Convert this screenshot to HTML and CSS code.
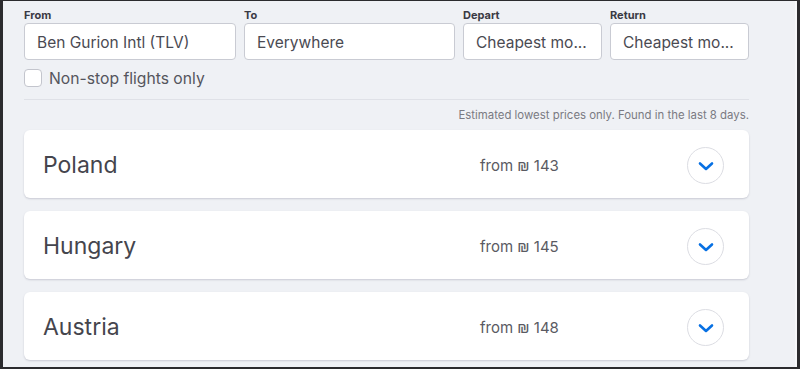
FILE: index.html
```html
<!DOCTYPE html>
<html>
<head>
<meta charset="utf-8">
<link rel="stylesheet" href="styles.css">
</head>
<body>
<div class="frame">
  <div class="content">
    <div class="fields">
      <div class="field f-from">
        <div class="label">From</div>
        <div class="box">Ben Gurion Intl (TLV)</div>
      </div>
      <div class="field f-to">
        <div class="label">To</div>
        <div class="box">Everywhere</div>
      </div>
      <div class="field f-date">
        <div class="label">Depart</div>
        <div class="box">Cheapest mo...</div>
      </div>
      <div class="field f-date">
        <div class="label">Return</div>
        <div class="box">Cheapest mo...</div>
      </div>
    </div>
    <label class="check"><span class="checkbox"></span><span>Non-stop flights only</span></label>
    <div class="divider"></div>
    <div class="note">Estimated lowest prices only. Found in the last 8 days.</div>
    <div class="list">
      <div class="card">
        <div class="country">Poland</div>
        <div class="price">from ₪ 143</div>
        <div class="toggle"><svg width="18" height="12" viewBox="0 0 18 12"><path d="M3 3.5 L9 9 L15 3.5" fill="none" stroke="#0770e3" stroke-width="2.6" stroke-linecap="round" stroke-linejoin="round"/></svg></div>
      </div>
      <div class="card">
        <div class="country">Hungary</div>
        <div class="price">from ₪ 145</div>
        <div class="toggle"><svg width="18" height="12" viewBox="0 0 18 12"><path d="M3 3.5 L9 9 L15 3.5" fill="none" stroke="#0770e3" stroke-width="2.6" stroke-linecap="round" stroke-linejoin="round"/></svg></div>
      </div>
      <div class="card">
        <div class="country">Austria</div>
        <div class="price">from ₪ 148</div>
        <div class="toggle"><svg width="18" height="12" viewBox="0 0 18 12"><path d="M3 3.5 L9 9 L15 3.5" fill="none" stroke="#0770e3" stroke-width="2.6" stroke-linecap="round" stroke-linejoin="round"/></svg></div>
      </div>
    </div>
  </div>
</div>
</body>
</html>
```

FILE: styles.css
```css
* { box-sizing: border-box; }
html, body { margin: 0; padding: 0; }
body {
  width: 800px;
  height: 369px;
  overflow: hidden;
  font-family: Inter, "Noto Sans", sans-serif;
  color: #444;
  background: #2b2b2e;
}
.frame {
  height: 366px;
  margin-top: 1px;
  margin-left: 3px;
  margin-right: 3px;
  background: #eff1f5;
  border-right: 2px solid #f7f8fa;
  overflow: hidden;
}
.content {
  width: 725px;
  margin-left: 21px;
}
.fields {
  display: flex;
  gap: 8px;
  padding-top: 7px;
}
.field { display: flex; flex-direction: column; }
.f-from { width: 212px; }
.f-to { width: 211px; }
.f-date { width: 139px; }
.label {
  font-size: 11px;
  font-weight: 700;
  color: #3a3a44;
  height: 15px;
  line-height: 15px;
}
.box {
  height: 37px;
  background: #fff;
  border: 1px solid #c9cbd3;
  border-radius: 4px;
  padding-left: 12px;
  font-size: 15.5px;
  line-height: 37px;
  color: #4a4a52;
  white-space: nowrap;
  overflow: hidden;
}
.check {
  display: flex;
  align-items: center;
  gap: 7px;
  margin-top: 9px;
  height: 18px;
  font-size: 15.7px;
  color: #55555d;
}
.checkbox {
  width: 18px;
  height: 18px;
  border: 1px solid #c3c5cd;
  border-radius: 4px;
  background: #fff;
}
.divider {
  margin-top: 12px;
  height: 1px;
  background: #dfe1e7;
}
.note {
  text-align: right;
  font-size: 11.4px;
  color: #7a7a82;
  margin-top: 9px;
  line-height: 13px;
}
.list {
  display: flex;
  flex-direction: column;
  gap: 13px;
  margin-top: 8px;
}
.card {
  height: 68px;
  background: #fff;
  border-radius: 6px;
  box-shadow: 0 1px 2px rgba(30, 30, 60, 0.18);
  display: flex;
  align-items: center;
  padding-left: 19px;
  padding-right: 25px;
  padding-top: 2px;
}
.country {
  font-size: 23px;
  color: #45454d;
  width: 437px;
}
.price {
  font-size: 15px;
  color: #5a5a62;
  flex: 1;
}
.toggle {
  width: 37px;
  height: 37px;
  border-radius: 50%;
  border: 1px solid #dcdde3;
  display: flex;
  align-items: center;
  justify-content: center;
  padding-top: 2px;
}
```
